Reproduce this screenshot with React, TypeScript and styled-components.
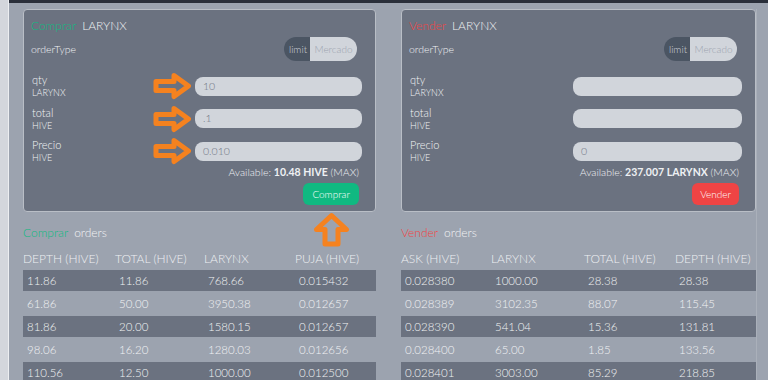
import React from 'react';
import styled, { createGlobalStyle } from 'styled-components';

const GlobalStyle = createGlobalStyle`
  html, body {
    margin: 0;
    padding: 0;
    height: 380px;
    overflow: hidden;
    background: #9ca3af;
    font-family: Lato, "Open Sans", "Liberation Sans", sans-serif;
    font-weight: 300;
  }
  * { box-sizing: border-box; }
`;

const colors = {
  page: '#9ca3af',
  card: '#6b7280',
  field: '#d1d5db',
  toggleOn: '#4b5563',
  green: '#10b981',
  red: '#ef4444',
  orange: '#f5821f',
  text: '#f1f2f4',
};

const Frame = styled.div`
  display: flex;
  height: 380px;
`;

const Rail = styled.div`
  flex: 0 0 9px;
  background: #d3d6dc;
  border-right: 1px solid #eceef1;
`;

const Main = styled.div`
  flex: 1;
  background: ${colors.page};
  border-top: 3px solid #2a2f3a;
  padding: 6px 0 0 14px;
`;

const Columns = styled.div`
  display: grid;
  grid-template-columns: 353px 355px;
  column-gap: 25px;
  width: 734px;
  border-right: 1px solid #aab0ba;
  height: 100%;
`;

const Column = styled.div`
  display: flex;
  flex-direction: column;
`;

const Card = styled.div`
  position: relative;
  background: ${colors.card};
  border: 1px solid #b9bec6;
  border-radius: 4px;
  padding: 7px 13px 6px 7px;
  color: ${colors.text};
`;

const Title = styled.div`
  font-size: 12px;
  line-height: 18px;
  height: 18px;
`;

const Side = styled.span<{ $sell?: boolean }>`
  color: ${(p) => (p.$sell ? colors.red : colors.green)};
  margin-right: 6px;
`;

const TypeRow = styled.div`
  display: flex;
  align-items: center;
  justify-content: space-between;
  margin-top: 2px;
  padding-right: 5px;
  font-size: 10.5px;
`;

const Toggle = styled.div`
  display: flex;
  height: 24px;
  border-radius: 12px;
  overflow: hidden;
  font-size: 10px;
`;

const ToggleOption = styled.div<{ $active?: boolean }>`
  display: flex;
  align-items: center;
  justify-content: center;
  width: ${(p) => (p.$active ? 26 : 47)}px;
  padding-left: ${(p) => (p.$active ? 2 : 0)}px;
  background: ${(p) => (p.$active ? colors.toggleOn : colors.field)};
  color: ${(p) => (p.$active ? '#d1d5db' : '#9ca3af')};
`;

const Fields = styled.div`
  display: flex;
  flex-direction: column;
  gap: 6.5px;
  margin-top: 12px;
`;

const Field = styled.div`
  display: grid;
  grid-template-columns: 164px 1fr;
  align-items: center;
  height: 26px;
`;

const Label = styled.div`
  position: relative;
  display: flex;
  flex-direction: column;
  line-height: 13px;
  font-size: 11px;
  padding-left: 1px;

  small {
    font-size: 9px;
  }
`;

const Input = styled.div`
  height: 19px;
  border-radius: 8px;
  background: ${colors.field};
  color: #6b7280;
  font-size: 10.5px;
  line-height: 19px;
  padding-left: 8px;
`;

const Available = styled.div`
  text-align: right;
  font-size: 10.5px;
  line-height: 12px;
  margin-top: 2px;
  padding-right: 3px;
  color: #eef0f3;

  b {
    font-weight: 700;
  }
`;

const Actions = styled.div`
  display: flex;
  justify-content: flex-end;
  margin-top: 5px;
  padding-right: 3px;
`;

const Button = styled.div<{ $sell?: boolean }>`
  height: 22px;
  padding: 0 ${(p) => (p.$sell ? 8 : 9)}px;
  border-radius: 6px;
  background: ${(p) => (p.$sell ? colors.red : colors.green)};
  color: #fff;
  font-size: 10px;
  line-height: 22px;
`;

const ArrowSlot = styled.div`
  position: absolute;
  right: 3px;
  top: 50%;
  transform: translateY(-50%);
  display: flex;
`;

const UpArrowSlot = styled.div`
  position: absolute;
  top: calc(100% + 1px);
  right: 25px;
  display: flex;
`;

const OrdersTitle = styled.div`
  margin-top: 14px;
  font-size: 12px;
  line-height: 14px;
  color: ${colors.text};
`;

const Table = styled.div`
  margin-top: 10px;
  display: flex;
  flex-direction: column;
`;

const Row = styled.div<{ $cols: string; $dark?: boolean; $head?: boolean }>`
  display: grid;
  grid-template-columns: ${(p) => p.$cols};
  align-items: center;
  height: ${(p) => (p.$head ? 14 : 23)}px;
  margin-bottom: ${(p) => (p.$head ? 5 : 0)}px;
  border-top: 1px solid transparent;
  border-bottom: 1px solid transparent;
  background: ${(p) => (p.$dark ? colors.card : 'transparent')};
  background-clip: padding-box;
  font-size: ${(p) => (p.$head ? 12 : 11.5)}px;
  color: ${(p) => (p.$head ? '#eef0f3' : colors.text)};
  white-space: nowrap;
`;

const Cell = styled.div<{ $head?: boolean }>`
  padding-left: ${(p) => (p.$head ? 0 : 4)}px;
`;

const RightArrow = () => (
  <svg width="40" height="28" viewBox="0 0 40 28">
    <polygon
      points="4,9.5 22,9.5 22,3.5 36.5,14 22,24.5 22,18.5 4,18.5"
      fill="none"
      stroke={colors.orange}
      strokeWidth="5"
      strokeLinejoin="round"
    />
  </svg>
);

const UpArrow = () => (
  <svg width="37" height="35" viewBox="0 0 37 35">
    <polygon
      points="12,32 12,17.5 3.5,17.5 18.5,3.5 33.5,17.5 25,17.5 25,32"
      fill="none"
      stroke={colors.orange}
      strokeWidth="5"
      strokeLinejoin="round"
    />
  </svg>
);

interface FieldProps {
  name: string;
  unit: string;
  value: string;
  arrow?: boolean;
}

const FormField = ({ name, unit, value, arrow }: FieldProps) => (
  <Field>
    <Label>
      <span>{name}</span>
      <small>{unit}</small>
      {arrow && (
        <ArrowSlot>
          <RightArrow />
        </ArrowSlot>
      )}
    </Label>
    <Input>{value}</Input>
  </Field>
);

interface TradeCardProps {
  sell?: boolean;
  values: string[];
  balance: string;
}

const TradeCard = ({ sell, values, balance }: TradeCardProps) => (
  <Card>
    <Title>
      <Side $sell={sell}>{sell ? 'Vender' : 'Comprar'}</Side>
      LARYNX
    </Title>
    <TypeRow>
      <span>orderType</span>
      <Toggle>
        <ToggleOption $active>limit</ToggleOption>
        <ToggleOption>Mercado</ToggleOption>
      </Toggle>
    </TypeRow>
    <Fields>
      <FormField name="qty" unit="LARYNX" value={values[0]} arrow={!sell} />
      <FormField name="total" unit="HIVE" value={values[1]} arrow={!sell} />
      <FormField name="Precio" unit="HIVE" value={values[2]} arrow={!sell} />
    </Fields>
    <Available>
      Available: <b>{balance}</b> (MAX)
    </Available>
    <Actions>
      <Button $sell={sell}>{sell ? 'Vender' : 'Comprar'}</Button>
    </Actions>
    {!sell && (
      <UpArrowSlot>
        <UpArrow />
      </UpArrowSlot>
    )}
  </Card>
);

interface OrdersProps {
  sell?: boolean;
  cols: string;
  head: string[];
  rows: string[][];
}

const Orders = ({ sell, cols, head, rows }: OrdersProps) => (
  <>
    <OrdersTitle>
      <Side $sell={sell}>{sell ? 'Vender' : 'Comprar'}</Side>
      orders
    </OrdersTitle>
    <Table>
      <Row $cols={cols} $head>
        {head.map((h) => (
          <Cell key={h} $head>{h}</Cell>
        ))}
      </Row>
      {rows.map((r, i) => (
        <Row key={i} $cols={cols} $dark={i % 2 === 0}>
          {r.map((c, j) => (
            <Cell key={j}>{c}</Cell>
          ))}
        </Row>
      ))}
    </Table>
  </>
);

const bids = [
  ['11.86', '11.86', '768.66', '0.015432'],
  ['61.86', '50.00', '3950.38', '0.012657'],
  ['81.86', '20.00', '1580.15', '0.012657'],
  ['98.06', '16.20', '1280.03', '0.012656'],
  ['110.56', '12.50', '1000.00', '0.012500'],
];

const asks = [
  ['0.028380', '1000.00', '28.38', '28.38'],
  ['0.028389', '3102.35', '88.07', '115.45'],
  ['0.028390', '541.04', '15.36', '131.81'],
  ['0.028400', '65.00', '1.85', '133.56'],
  ['0.028401', '3003.00', '85.29', '218.85'],
];

export default function App() {
  return (
    <>
      <GlobalStyle />
      <Frame>
        <Rail />
        <Main>
          <Columns>
            <Column>
              <TradeCard values={['10', '.1', '0.010']} balance="10.48 HIVE" />
              <Orders
                cols="92px 89px 91px 1fr"
                head={['DEPTH (HIVE)', 'TOTAL (HIVE)', 'LARYNX', 'PUJA (HIVE)']}
                rows={bids}
              />
            </Column>
            <Column>
              <TradeCard sell values={['', '', '0']} balance="237.007 LARYNX" />
              <Orders
                sell
                cols="90px 93px 91px 1fr"
                head={['ASK (HIVE)', 'LARYNX', 'TOTAL (HIVE)', 'DEPTH (HIVE)']}
                rows={asks}
              />
            </Column>
          </Columns>
        </Main>
      </Frame>
    </>
  );
}
